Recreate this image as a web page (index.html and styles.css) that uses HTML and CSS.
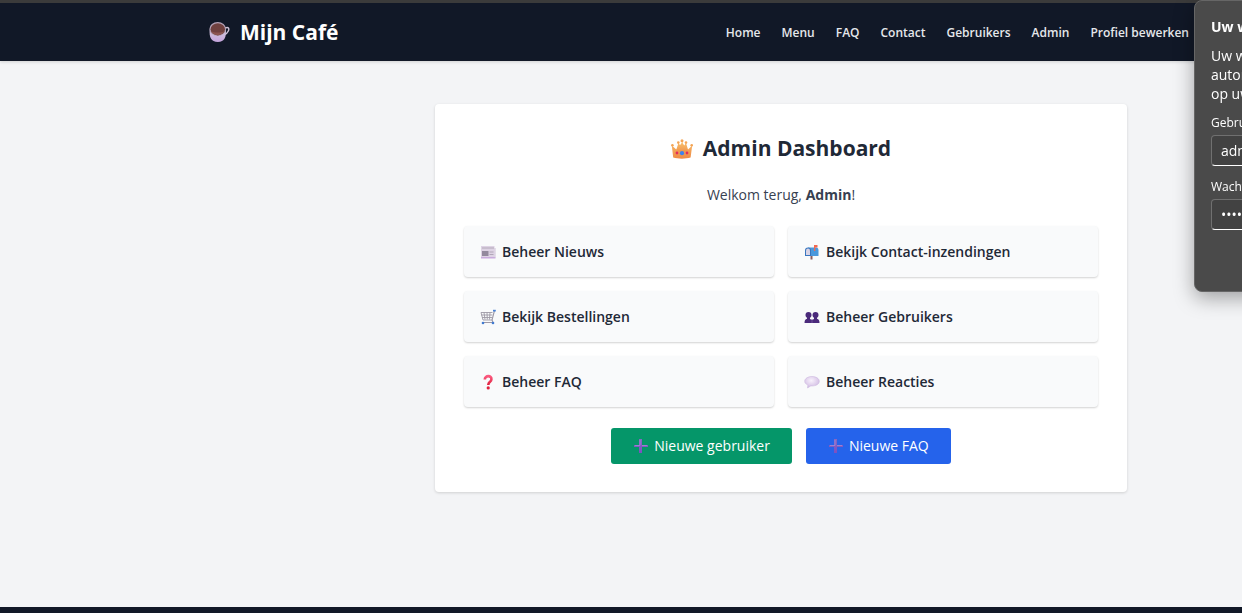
FILE: index.html
```html
<!DOCTYPE html>
<html lang="nl">
<head>
<meta charset="utf-8">
<meta name="viewport" content="width=device-width, initial-scale=1">
<title>Mijn Café</title>
<link rel="stylesheet" href="styles.css">
</head>
<body>
<svg class="defs" aria-hidden="true">
  <defs>
    <linearGradient id="violet" x1="0" y1="0" x2="0" y2="1"><stop offset="0" stop-color="#8468c4"/><stop offset="1" stop-color="#7d4fc0"/></linearGradient>
    <linearGradient id="gold" x1="0" y1="0" x2="0" y2="1"><stop offset="0" stop-color="#f8c06c"/><stop offset="1" stop-color="#ee8a45"/></linearGradient>
    <linearGradient id="cup" x1="0" y1="0" x2="0" y2="1"><stop offset="0" stop-color="#d5cbdc"/><stop offset="1" stop-color="#c3a3dc"/></linearGradient>
    <linearGradient id="red" x1="0" y1="0" x2="0" y2="1"><stop offset="0" stop-color="#fb5a80"/><stop offset="1" stop-color="#e0203c"/></linearGradient>
    <radialGradient id="bubble" cx=".45" cy=".35" r=".7"><stop offset="0" stop-color="#f8f1fc"/><stop offset="1" stop-color="#cdb6e0"/></radialGradient>
    <symbol id="plus" viewBox="0 0 16 16"><path d="M6 1h3v6h6v2H9v6H6V9H1V7h5z" fill="url(#violet)"/><path d="M7 2v5.500H2M9 7.500h5" fill="none" stroke="#a18cd4" stroke-width=".8"/></symbol>
  </defs>
</svg>
<header class="topbar">
  <a class="brand" href="#">
    <svg class="brand-icon" viewBox="0 0 22 22" aria-hidden="true">
      <path d="M17 7c3.500-1.500 4.500.5 3.300 3-.9 2-2.300 3.200-4 3.800" fill="none" stroke="#cfc3d8" stroke-width="1.400"/>
      <path d="M1.700 8.500C1 16 3 21 9.800 21S18.500 16 17.800 8.500z" fill="url(#cup)"/>
      <ellipse cx="9.700" cy="8" rx="8.300" ry="7" fill="#b5a4b9"/>
      <ellipse cx="9.800" cy="8.300" rx="7.200" ry="6.100" fill="#70413f"/>
      <path d="M3 10c2 5.500 11.500 5.500 13.500 0-3 2-10.500 2-13.500 0z" fill="#8c5550"/>
    </svg>
    Mijn Café
  </a>
  <nav class="nav">
    <a href="#">Home</a>
    <a href="#">Menu</a>
    <a href="#">FAQ</a>
    <a href="#">Contact</a>
    <a href="#">Gebruikers</a>
    <a href="#">Admin</a>
    <a href="#">Profiel bewerken</a>
  </nav>
</header>
<main class="main">
  <section class="card">
    <h1 class="title">
      <svg class="title-icon" viewBox="0 0 22 22" aria-hidden="true">
        <g transform="translate(0 2)">
        <path d="M2.200 18.500.800 6.500l4.500 4L7.500 4 11 9l-.2-7.500h.8L11.500 9 15 4l2 6.500 4.200-4-1.600 12c-5 1.500-12.500 1.500-17.400 0z" fill="url(#gold)"/>
        <path d="M5.400 11 11 3.500 16.800 11l-5.600 4z" fill="url(#gold)"/>
        <g fill="#f4a556"><circle cx="1.400" cy="6.200" r="1.300"/><circle cx="7.300" cy="3.600" r="1.300"/><circle cx="11" cy="1.800" r="1.500"/><circle cx="15" cy="3.600" r="1.300"/><circle cx="20.700" cy="6.200" r="1.300"/></g>
        <circle cx="11" cy="14.200" r="2.100" fill="#3c82ee"/>
        <circle cx="6" cy="14" r="1.400" fill="#e32d5c"/><circle cx="16" cy="14" r="1.400" fill="#e32d5c"/>
        </g>
      </svg>
      Admin Dashboard
    </h1>
    <p class="welcome">Welkom terug, <strong>Admin</strong>!</p>
    <div class="tiles">
      <a class="tile" href="#">
        <svg class="icon" viewBox="0 0 16 16" aria-hidden="true"><path d="M1 2h13.500v12H1z" fill="#ded3e4"/><path d="M1 13h14.500v1.500H1z" fill="#c9aadd"/><path d="M14.500 4h1v9.500h-1z" fill="#cfc2d8"/><path d="M2 4h12M9.500 8h4M9.500 10.500h4" stroke="#b1a7b8" stroke-width="1.200"/><path d="M2 7h6.500v5H2z" fill="#93899d"/></svg>
        Beheer Nieuws
      </a>
      <a class="tile" href="#">
        <svg class="icon" viewBox="0 0 16 16" aria-hidden="true"><path d="M6.500 11h2v4.500h-2z" fill="#8b5d5d"/><path d="M4 3.500h8q2.500 0 2.500 3V12H4z" fill="#4a98dc"/><path d="M1 12V6.500q0-3 3-3t3 3V12z" fill="#3976bf"/><path d="M2 11V6.500q0-2 2-2t2 2V11z" fill="#d9d4e6"/><path d="M10 1h3.500v2.600h-2.300V7H10z" fill="#f26951"/></svg>
        Bekijk Contact-inzendingen
      </a>
      <a class="tile" href="#">
        <svg class="icon" viewBox="0 0 16 16" aria-hidden="true"><g fill="none" stroke="#9d98a5"><path d="M1 3.500h11.500M1.300 6h11M2 8.500h10M1 3.500l2 7.500h9.500M4 3.500l1 7M7 3.500l.3 7M10 3.500l-.5 7" stroke-width=".9"/><path d="M14.500 1.500 12 11l1 2.500H3" stroke-width="1.100"/></g><path d="M13 .8h2.800v1.700H13z" fill="#4781d7"/><circle cx="3" cy="14" r="1.300" fill="#427bd0"/><circle cx="13" cy="14" r="1.300" fill="#427bd0"/></svg>
        Bekijk Bestellingen
      </a>
      <a class="tile" href="#">
        <svg class="icon" viewBox="0 0 16 16" aria-hidden="true"><g fill="#4b2a7b"><circle cx="4.500" cy="6" r="3"/><circle cx="11.500" cy="6" r="3"/><path d="M3 8h3v2l2 1 2-1V8h3v1.700q2.500.3 2.500 4.300H.500q0-4 2.500-4.300z"/></g><path d="M8 10v4" stroke="#7e60a8" stroke-width=".7"/></svg>
        Beheer Gebruikers
      </a>
      <a class="tile" href="#">
        <svg class="icon" viewBox="0 0 16 16" aria-hidden="true"><path d="M4.800 5.500C4.800 1 12 1 11.400 5.500 11.200 8 8.300 7.800 8.300 11" fill="none" stroke="url(#red)" stroke-width="2.600"/><circle cx="8.200" cy="13.900" r="1.600" fill="#e0203c"/></svg>
        Beheer FAQ
      </a>
      <a class="tile" href="#">
        <svg class="icon" viewBox="0 0 16 16" aria-hidden="true"><path d="M8 2.500c4 0 7.300 2 7.300 4.800S12 12 8 12l-1.200-.1L3.500 14l.4-3C2 10.200.7 9 .7 7.300.7 4.500 4 2.500 8 2.500z" fill="url(#bubble)" stroke="#c9b3dc" stroke-width=".5"/></svg>
        Beheer Reacties
      </a>
    </div>
    <div class="actions">
      <a class="btn btn-green" href="#"><svg class="icon" aria-hidden="true"><use href="#plus"/></svg>Nieuwe gebruiker</a>
      <a class="btn btn-blue" href="#"><svg class="icon" aria-hidden="true"><use href="#plus"/></svg>Nieuwe FAQ</a>
    </div>
  </section>
</main>
<footer class="footer"></footer>
<form class="prompt">
  <h2 class="prompt-title">Uw wachtwoord opslaan</h2>
  <p class="prompt-text">Uw wachtwoord wordt<br>automatisch ingevuld<br>op uw apparaten</p>
  <label class="prompt-label" for="user">Gebruikersnaam</label>
  <input class="prompt-input" id="user" type="text" value="admin">
  <label class="prompt-label" for="pass">Wachtwoord</label>
  <input class="prompt-input" id="pass" type="password" value="password">
</form>
</body>
</html>
```
FILE: styles.css
```css
* {
  box-sizing: border-box;
}

body {
  margin: 0;
  min-height: 100vh;
  display: flex;
  flex-direction: column;
  overflow-x: hidden;
  border-top: 3px solid #3b3b3b;
  background: #f3f4f6;
  color: #1f2937;
  font-family: "Open Sans", "Noto Sans", sans-serif;
  font-size: 14px;
  line-height: 21px;
}

a {
  color: inherit;
  text-decoration: none;
}

.defs {
  position: absolute;
  width: 0;
  height: 0;
}

.topbar {
  display: flex;
  align-items: center;
  justify-content: space-between;
  height: 58px;
  padding: 0 53px 0 208px;
  background: #111827;
  color: #fff;
  box-shadow: 0 1px 3px rgba(0, 0, 0, 0.15);
}

.brand {
  display: flex;
  align-items: center;
  gap: 10px;
  font-size: 21px;
  line-height: 28px;
  font-weight: 700;
}

.brand-icon {
  width: 22px;
  height: 22px;
}

.nav {
  display: flex;
  gap: 21px;
  color: #e5e7eb;
  font-size: 12px;
  font-weight: 600;
  white-space: nowrap;
}

.main {
  flex: 1;
  display: flex;
  justify-content: center;
  align-items: flex-start;
  padding: 43px 0 43px 320px;
}

.card {
  width: 100%;
  max-width: 692px;
  padding: 28px 29px;
  border-radius: 4px;
  background: #fff;
  box-shadow: 0 1px 3px rgba(0, 0, 0, 0.15);
}

.title {
  display: flex;
  align-items: center;
  justify-content: center;
  gap: 10px;
  margin: 0 0 20px;
  font-size: 21px;
  line-height: 32px;
  font-weight: 700;
}

.title-icon {
  width: 22px;
  height: 22px;
}

.welcome {
  margin: 0 0 21px;
  color: #374151;
  text-align: center;
}

.tiles {
  display: grid;
  grid-template-columns: 1fr 1fr;
  gap: 14px;
}

.tile {
  display: flex;
  align-items: center;
  gap: 6px;
  padding: 15px 16px;
  border-radius: 4px;
  background: #f9fafb;
  font-weight: 600;
  box-shadow: 0 1px 2px rgba(0, 0, 0, 0.18);
}

.icon {
  width: 16px;
  height: 16px;
}

.actions {
  display: flex;
  justify-content: center;
  gap: 14px;
  margin-top: 21px;
}

.btn {
  display: flex;
  align-items: center;
  gap: 5px;
  padding: 8px 22px;
  border-radius: 3px;
  color: #fff;
  line-height: 20px;
}

.btn-green {
  background: #059669;
}

.btn-blue {
  background: #2563eb;
}

.footer {
  height: 6px;
  background: #111827;
}

.prompt {
  position: fixed;
  top: 0;
  right: -272px;
  width: 320px;
  height: 292px;
  padding: 16px;
  border: 1px solid #666;
  border-radius: 8px;
  background: #4a4a4a;
  color: #fff;
  box-shadow: 0 6px 20px rgba(0, 0, 0, 0.35);
}

.prompt-title {
  margin: 0 0 9px;
  font-size: 14px;
  line-height: 20px;
  font-weight: 700;
}

.prompt-text {
  margin: 0 0 10px;
  font-size: 14px;
  line-height: 19px;
}

.prompt-label {
  display: block;
  font-size: 12px;
  line-height: 20px;
}

.prompt-input {
  display: block;
  width: 100%;
  height: 31px;
  margin: 2px 0 11px;
  padding: 0 9px;
  border: 1px solid #707070;
  border-bottom-color: #fff;
  border-radius: 4px;
  background: #424242;
  color: #fff;
  font: inherit;
}
```
